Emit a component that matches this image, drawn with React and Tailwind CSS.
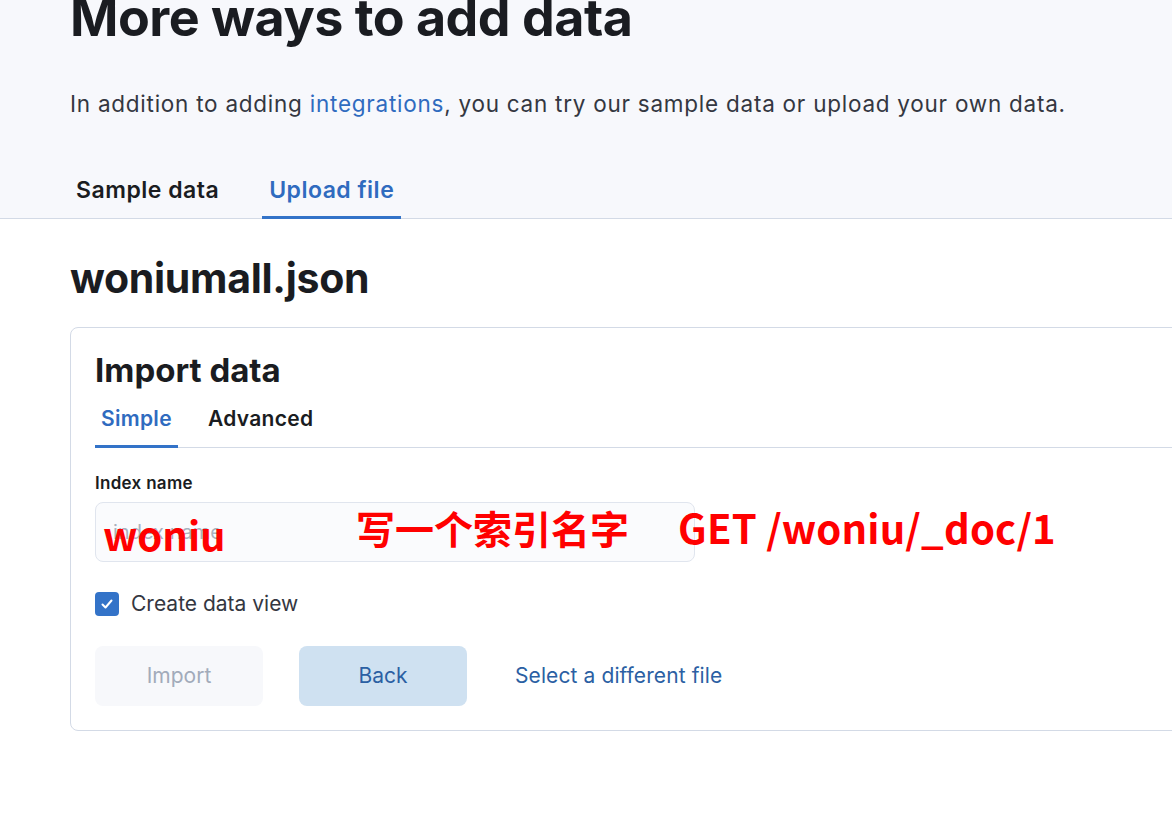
import React from 'react';

const redText = "font-['Noto_Sans_CJK_SC',sans-serif] font-bold text-[#ff0000] leading-none";

function Tab({ label, active, className }) {
  return (
    <div
      className={`flex items-center border-b-[3px] ${
        active ? 'border-[#3373c8] text-[#2f6bbf]' : 'border-transparent text-[#1a1c21]'
      } ${className}`}
    >
      {label}
    </div>
  );
}

export default function App() {
  return (
    <div className="w-[1172px] h-[818px] overflow-hidden bg-white font-['Inter',sans-serif] text-[#1a1c21]">
      <div className="bg-[#f7f8fc] border-b border-[#d3dae6] pl-[70px]">
        <h1 className="text-[52px] font-bold leading-none -mt-[8px] tracking-[-0.5px]">
          More ways to add data
        </h1>
        <p className="mt-[45px] text-[22.5px] leading-[30px] tracking-[0.75px] text-[#343741]">
          In addition to adding <span className="text-[#2f6bbf]">integrations</span>, you can try our sample data or upload your own data.
        </p>
        <div className="flex mt-[46px] text-[23px] font-semibold tracking-[0.5px] -mb-px">
          <Tab label="Sample data" className="h-[54px] px-[6px]" />
          <Tab label="Upload file" active className="h-[54px] ml-[37px] px-[7px]" />
        </div>
      </div>

      <div className="pl-[70px] pt-[36px]">
        <h2 className="text-[41px] font-bold leading-[46px] tracking-[-0.3px]">woniumall.json</h2>
        <div className="mt-[26px] w-[1130px] h-[404px] border border-[#d3dae6] rounded-l-[8px] pl-[24px] pt-[22px]">
          <h3 className="text-[33px] font-bold leading-[40px]">Import data</h3>
          <div className="flex border-b border-[#d3dae6] text-[21px] font-semibold tracking-[0.3px] mt-[4px]">
            <Tab label="Simple" active className="h-[54px] px-[6px] pb-[2px] -mb-px" />
            <Tab label="Advanced" className="h-[54px] ml-[24px] px-[6px] pb-[2px] -mb-px" />
          </div>

          <div className="mt-[25px] text-[17px] font-semibold leading-[20px] tracking-[0.3px]">Index name</div>
          <div className="relative mt-[9px] w-[600px] h-[60px] bg-[#fafbfd] border border-[#e0e5ee] rounded-[8px] flex items-center pl-[17px]">
            <span className="text-[20px] text-[#a9b1bd]">index name</span>
            <span className={`absolute left-[7px] top-[11px] text-[40px] ${redText}`}>woniu</span>
          </div>
          <div className={`absolute left-[356px] top-[508px] text-[39px] ${redText}`}>写一个索引名字</div>
          <div className={`absolute left-[678px] top-[507px] text-[40px] tracking-[0.2px] ${redText}`}>GET /woniu/_doc/1</div>

          <div className="flex items-center mt-[30px]">
            <div className="w-[24px] h-[24px] rounded-[4px] bg-[#3373c8] flex items-center justify-center">
              <svg width="14" height="14" viewBox="0 0 14 14" fill="none">
                <path d="M2.5 7.5l3 3 6-7" stroke="white" strokeWidth="2" strokeLinecap="round" strokeLinejoin="round" />
              </svg>
            </div>
            <span className="ml-[12px] text-[21px] leading-[24px] text-[#343741]">Create data view</span>
          </div>

          <div className="flex items-center mt-[30px] text-[21px]">
            <button className="w-[168px] h-[60px] rounded-[8px] bg-[#f7f8fb] text-[#a2abba]">Import</button>
            <button className="ml-[36px] w-[168px] h-[60px] rounded-[8px] bg-[#cfe1f1] text-[#2b5fa3]">Back</button>
            <span className="ml-[48px] text-[#2b5fa3] tracking-[0.1px]">Select a different file</span>
          </div>
        </div>
      </div>
    </div>
  );
}
